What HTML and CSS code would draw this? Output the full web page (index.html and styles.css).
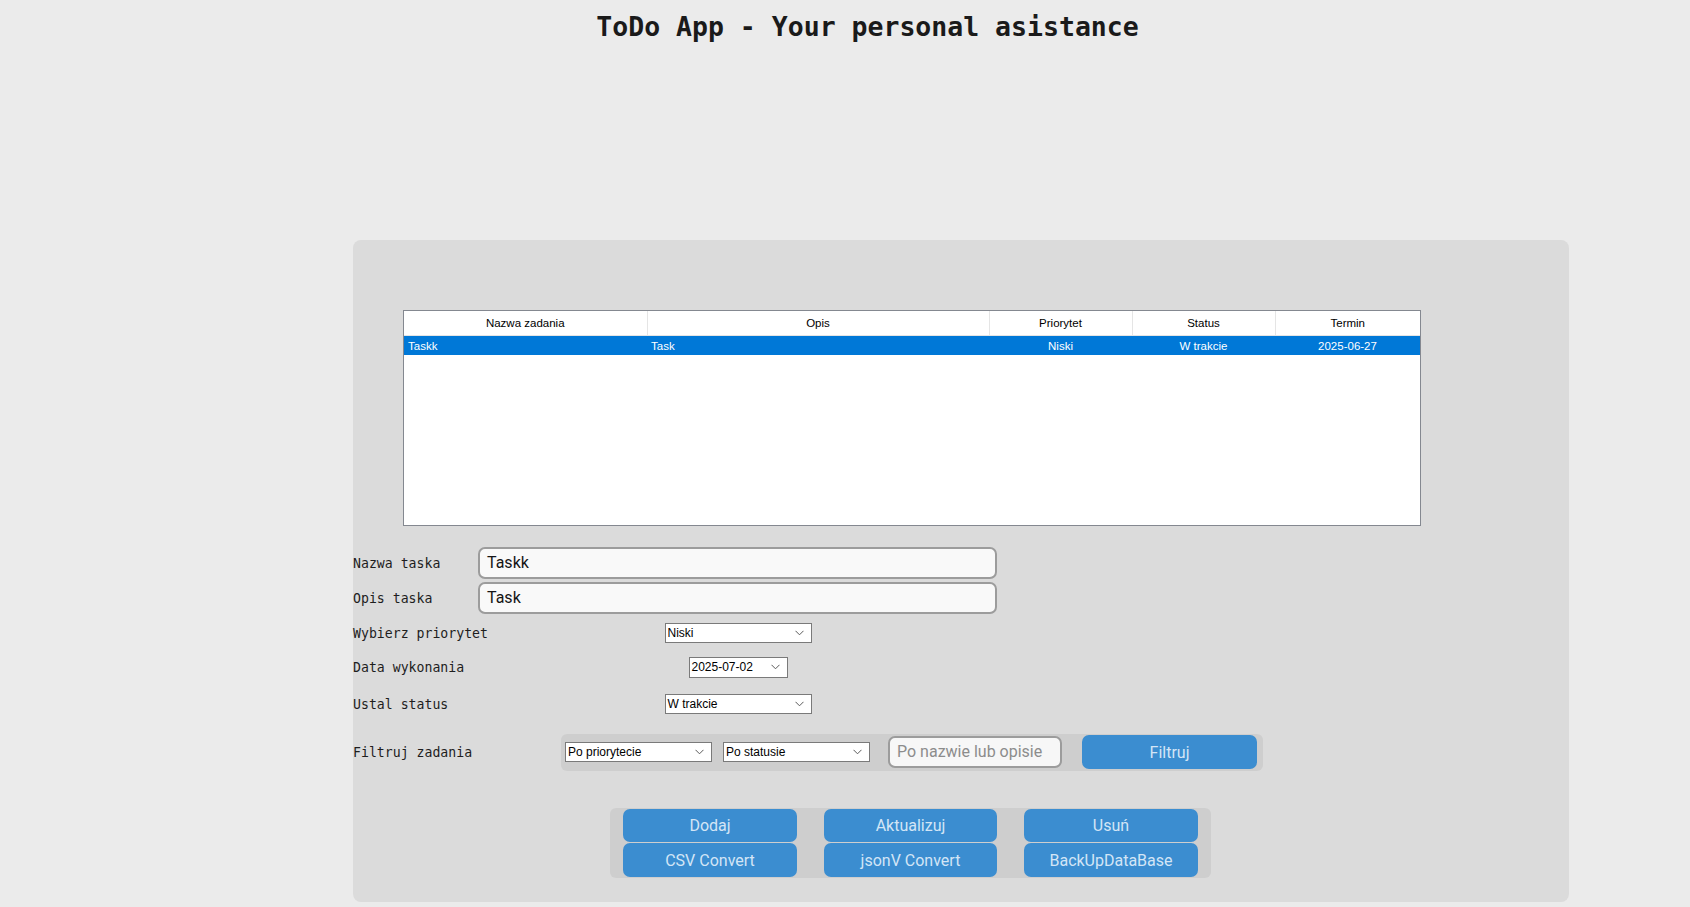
FILE: index.html
```html
<!DOCTYPE html>
<html lang="pl">
<head>
<meta charset="utf-8">
<title>ToDo App</title>
<link rel="stylesheet" href="styles.css">
</head>
<body>
<header class="top">
  <h1 class="title">ToDo App - Your personal asistance</h1>
</header>
<main class="panel">
  <div class="tree">
    <table class="grid">
      <colgroup>
        <col class="c1"><col class="c2"><col class="c3"><col class="c4"><col class="c5">
      </colgroup>
      <thead>
        <tr><th>Nazwa zadania</th><th>Opis</th><th>Priorytet</th><th>Status</th><th>Termin</th></tr>
      </thead>
      <tbody>
        <tr class="sel"><td class="l">Taskk</td><td class="l">Task</td><td>Niski</td><td>W trakcie</td><td>2025-06-27</td></tr>
      </tbody>
    </table>
  </div>

  <div class="row r1">
    <div class="label">Nazwa taska</div>
    <div class="field"><div class="entry">Taskk</div></div>
  </div>
  <div class="row r2">
    <div class="label">Opis taska</div>
    <div class="field"><div class="entry">Task</div></div>
  </div>
  <div class="row r3">
    <div class="label">Wybierz priorytet</div>
    <div class="field center">
      <div class="combo w147"><span>Niski</span><svg class="chev" width="9" height="6" viewBox="0 0 9 6"><path d="M0.5 0.8 L4.5 4.8 L8.5 0.8" fill="none" stroke="#5a5a5a" stroke-width="1"/></svg></div>
    </div>
  </div>
  <div class="row r4">
    <div class="label">Data wykonania</div>
    <div class="field center">
      <div class="combo w99"><span>2025-07-02</span><svg class="chev" width="9" height="6" viewBox="0 0 9 6"><path d="M0.5 0.8 L4.5 4.8 L8.5 0.8" fill="none" stroke="#5a5a5a" stroke-width="1"/></svg></div>
    </div>
  </div>
  <div class="row r5">
    <div class="label">Ustal status</div>
    <div class="field center">
      <div class="combo w147"><span>W trakcie</span><svg class="chev" width="9" height="6" viewBox="0 0 9 6"><path d="M0.5 0.8 L4.5 4.8 L8.5 0.8" fill="none" stroke="#5a5a5a" stroke-width="1"/></svg></div>
    </div>
  </div>
  <div class="row r6">
    <div class="label wide">Filtruj zadania</div>
    <div class="filter">
      <div class="combo w147"><span>Po priorytecie</span><svg class="chev" width="9" height="6" viewBox="0 0 9 6"><path d="M0.5 0.8 L4.5 4.8 L8.5 0.8" fill="none" stroke="#5a5a5a" stroke-width="1"/></svg></div>
      <div class="combo w147 ml11"><span>Po statusie</span><svg class="chev" width="9" height="6" viewBox="0 0 9 6"><path d="M0.5 0.8 L4.5 4.8 L8.5 0.8" fill="none" stroke="#5a5a5a" stroke-width="1"/></svg></div>
      <div class="entry search">Po nazwie lub opisie</div>
      <div class="btn filt">Filtruj</div>
    </div>
  </div>

  <div class="actions">
    <div class="btn">Dodaj</div>
    <div class="btn">Aktualizuj</div>
    <div class="btn">Usuń</div>
    <div class="btn">CSV Convert</div>
    <div class="btn">jsonV Convert</div>
    <div class="btn">BackUpDataBase</div>
  </div>
</main>
</body>
</html>
```

FILE: styles.css
```css
html, body {
  margin: 0;
  padding: 0;
}
body {
  background: #ebebeb;
  width: 1690px;
  height: 907px;
  overflow: hidden;
  font-family: "Liberation Sans", Arial, sans-serif;
}
.top {
  height: 47px;
  box-sizing: border-box;
  padding-top: 11px;
  padding-left: 45px;
  text-align: center;
}
.title {
  margin: 0;
  font-family: "DejaVu Sans Mono", "Liberation Mono", monospace;
  font-weight: bold;
  font-size: 26.5px;
  line-height: 32px;
  color: #1a1a1a;
  letter-spacing: 0;
}
.panel {
  margin-top: 193px;
  margin-left: 353px;
  width: 1216px;
  height: 662px;
  box-sizing: border-box;
  background: #dbdbdb;
  border-radius: 8px;
  padding-top: 70px;
}
.tree {
  margin-left: 50px;
  width: 1018px;
  height: 216px;
  box-sizing: border-box;
  border: 1px solid #848890;
  background: #ffffff;
}
.grid {
  border-collapse: collapse;
  table-layout: fixed;
  width: 1016px;
  font-family: "Liberation Sans", Arial, sans-serif;
  font-size: 11.5px;
  color: #000;
}
.c1 { width: 243px; }
.c2 { width: 342px; }
.c3 { width: 143px; }
.c4 { width: 143px; }
.c5 { width: 145px; }
.grid th {
  height: 24px;
  padding: 0;
  font-weight: normal;
  text-align: center;
  border-right: 1px solid #e5e5e5;
  border-bottom: 1px solid #e5e5e5;
}
.grid th:last-child { border-right: none; }
.grid td {
  height: 19px;
  padding: 0;
  text-align: center;
  white-space: nowrap;
}
.grid td.l {
  text-align: left;
  padding-left: 4px;
}
.grid tr.sel td {
  background: #0078d7;
  color: #ffffff;
}
.row {
  display: flex;
  align-items: center;
}
.r1 { margin-top: 20px; height: 34px; }
.r2 { height: 36px; }
.r3 { height: 34px; }
.r4 { height: 34px; }
.r5 { height: 40px; }
.r6 { height: 56px; }
.label {
  width: 125px;
  flex: none;
  font-family: "DejaVu Sans Mono", "Liberation Mono", monospace;
  font-size: 13.2px;
  color: #1e1e1e;
  white-space: nowrap;
}
.label.wide { width: 208px; }
.field {
  width: 519px;
  display: flex;
}
.field.center { justify-content: center; padding-left: 1px; box-sizing: border-box; }
.entry {
  width: 519px;
  height: 32px;
  box-sizing: border-box;
  border: 2px solid #9c9c9c;
  border-radius: 7px;
  background: #f9f9f9;
  font-family: Roboto, "Liberation Sans", sans-serif;
  font-size: 16px;
  line-height: 28px;
  padding-left: 7px;
  color: #151515;
}
.combo {
  height: 20px;
  box-sizing: border-box;
  border: 1px solid #7a7a7a;
  background: #ffffff;
  display: flex;
  align-items: center;
  justify-content: space-between;
  padding-left: 2px;
  padding-right: 7px;
  font-family: "Liberation Sans", Arial, sans-serif;
  font-size: 12px;
  color: #000;
}
.combo.w147 { width: 147px; }
.combo.w99 { width: 99px; height: 21px; }
.combo .chev { flex: none; }
.ml11 { margin-left: 11px; }
.filter {
  width: 702px;
  height: 37px;
  box-sizing: border-box;
  background: #cecece;
  border-radius: 6px;
  display: flex;
  align-items: center;
  padding-left: 4px;
}
.entry.search {
  width: 174px;
  margin-left: 18px;
  color: #8c8c8c;
  background: #f7f7f7;
}
.btn {
  height: 33px;
  box-sizing: border-box;
  background: #3b8dd0;
  border-radius: 7px;
  color: #d3e5f6;
  font-family: Roboto, "Liberation Sans", sans-serif;
  font-size: 16px;
  display: flex;
  align-items: center;
  justify-content: center;
}
.btn.filt {
  width: 175px;
  height: 34px;
  margin-left: 20px;
}
.actions {
  margin-top: 28px;
  margin-left: 257px;
  width: 601px;
  height: 70px;
  box-sizing: border-box;
  background: #cecece;
  border-radius: 6px;
  padding: 1px 12px 1px 13px;
  display: grid;
  grid-template-columns: 174px 173px 174px;
  column-gap: 27px;
  row-gap: 1px;
  grid-template-rows: 33px 34px;
}
.actions .btn { height: auto; }
```
